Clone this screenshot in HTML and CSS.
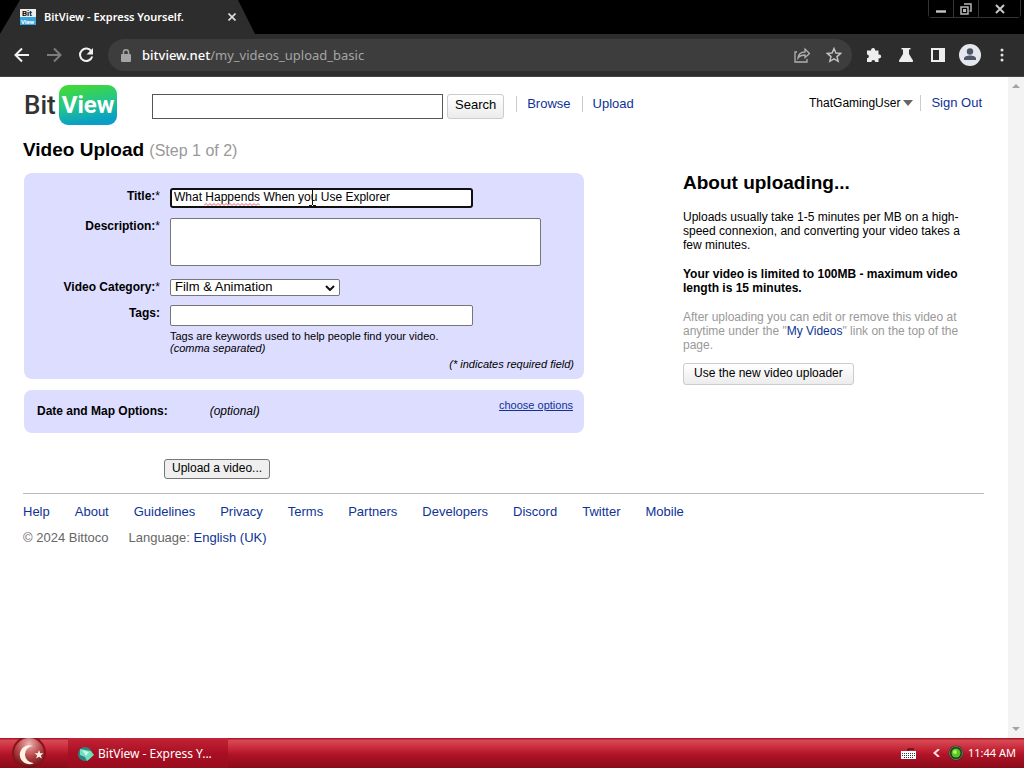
FILE: index.html
```html
<!DOCTYPE html>
<html lang="en">
<head>
  <meta charset="UTF-8">
  <meta name="viewport" content="width=device-width, initial-scale=1.0">
  <title>BitView - Express Yourself.</title>
  <link rel="stylesheet" href="styles.css">
</head>
<body>
  <div class="tab-strip">
    <div class="tab">
      <svg class="favicon" width="16" height="16" viewBox="0 0 16 16">
        <rect width="16" height="8" fill="#eee"/><rect y="8" width="16" height="8" fill="#3aa5dc"/>
        <text x="2" y="7" font-size="8" font-weight="bold" fill="#111">Bit</text>
        <text x="1" y="15" font-size="6" font-weight="bold" fill="#fff">View</text>
      </svg>
      <span class="tab-title">BitView - Express Yourself.</span>
      <button class="tab-close" aria-label="Close tab"><svg width="8" height="8" viewBox="0 0 8 8"><path d="M0.5 0.5l7 7M7.5 0.5l-7 7" stroke="#ddd" stroke-width="1.7"/></svg></button>
    </div>
    <div class="window-buttons">
      <button aria-label="Minimise"><svg width="12" height="12" viewBox="0 0 12 12"><path d="M1 8.5h10" stroke="#c4c4c4" stroke-width="2.4"/></svg></button>
      <button aria-label="Restore"><svg width="12" height="12" viewBox="0 0 12 12" fill="none" stroke="#b8b8b8" stroke-width="1.5"><path d="M1 4h7v7H1zM3.8 6.800h1.500v1.500H3.800zM4 1h7v7H9.500"/></svg></button>
      <button class="wide" aria-label="Close window"><svg width="10" height="10" viewBox="0 0 10 10"><path d="M1 1l8 8M9 1l-8 8" stroke="#c8c8c8" stroke-width="2"/></svg></button>
    </div>
  </div>

  <div class="toolbar">
    <button aria-label="Back"><svg width="16" height="16" viewBox="0 0 16 16"><path d="M15 8H2M8 1.500L1.500 8L8 14.500" fill="none" stroke="#f1f1f1" stroke-width="2"/></svg></button>
    <button aria-label="Forward"><svg width="16" height="16" viewBox="0 0 16 16"><path d="M1 8h13M8 1.500L14.500 8L8 14.500" fill="none" stroke="#7d7d7d" stroke-width="2"/></svg></button>
    <button aria-label="Reload"><svg width="16" height="16" viewBox="0 0 16 16"><path d="M13.500 4.500A6.200 6.200 0 1 0 14.200 9.500" fill="none" stroke="#f1f1f1" stroke-width="2"/><path d="M15 1v6.500H8.500z" fill="#f1f1f1"/></svg></button>
    <div class="address">
      <svg width="10" height="13" viewBox="0 0 10 13"><rect y="5" width="10" height="8" rx="1" fill="#a5a5a5"/><path d="M2.500 5V3.300a2.500 2.500 0 0 1 5 0V5" fill="none" stroke="#a5a5a5" stroke-width="1.500"/></svg>
      <span class="url"><b>bitview.net</b>/my_videos_upload_basic</span>
      <button aria-label="Share"><svg width="16" height="16" viewBox="0 0 16 16" fill="none" stroke="#b0b0b0" stroke-width="1.300"><path d="M3 5H1v10h12v-3"/><path d="M4 11c.5-4 3-6 7-6V2l4.500 4.500L11 10.500V8C8 8 5.500 9 4 11z"/></svg></button>
      <button aria-label="Bookmark"><svg width="16" height="16" viewBox="0 0 16 16"><path d="M8 1.500l1.900 4.500 4.800.4-3.700 3.200 1.200 4.700L8 11.800l-4.200 2.500L5 9.600 1.300 6.400l4.800-.4z" fill="none" stroke="#c4c4c4" stroke-width="1.400"/></svg></button>
    </div>
    <button aria-label="Extensions"><svg width="16" height="16" viewBox="0 0 16 16"><path d="M1 3.500h4.200a2 2 0 1 1 3.800 0h3.500v4a2 2 0 1 1 0 3.800V15H9.200a1.900 1.900 0 0 0-3.800 0H1v-3.800a1.900 1.900 0 0 0 0-3.800z" fill="#eee"/></svg></button>
    <button aria-label="Labs"><svg width="16" height="16" viewBox="0 0 16 16"><path d="M3.500 1h9v1.500H11V7l4 6.500q.5 1.500-1 1.500H2q-1.500 0-1-1.500L5 7V2.500H3.500z" fill="#eee"/></svg></button>
    <button aria-label="Side panel"><svg width="14" height="14" viewBox="0 0 14 14"><path fill-rule="evenodd" d="M0 0h14v14H0zM2 2v10h6V2z" fill="#eee"/></svg></button>
    <button aria-label="Profile"><svg width="22" height="22" viewBox="0 0 22 22"><circle cx="11" cy="11" r="11" fill="#e4e7ee"/><circle cx="11" cy="7.500" r="3.200" fill="#4d5566"/><path d="M5 16v-1.500c0-4 12-4 12 0V16z" fill="#4d5566"/></svg></button>
    <button class="menu" aria-label="Menu"><svg width="4" height="16" viewBox="0 0 4 16" fill="#e4e4e4"><circle cx="2" cy="3" r="1.500"/><circle cx="2" cy="8" r="1.500"/><circle cx="2" cy="13" r="1.500"/></svg></button>
  </div>

  <div class="viewport">
    <div class="page">
      <header class="header">
        <a class="logo" href="#"><span class="logo-bit">Bit</span><span class="logo-view">View</span></a>
        <form class="search">
          <input type="text" aria-label="Search videos">
          <button class="btn" type="button">Search</button>
        </form>
        <nav class="nav"><a href="#">Browse</a><a href="#">Upload</a></nav>
        <div class="user">
          <button type="button" class="user-name">ThatGamingUser <svg width="10" height="6" viewBox="0 0 10 6"><path d="M0 0h10L5 6z" fill="#666"/></svg></button>
          <a href="#">Sign Out</a>
        </div>
      </header>

      <h1>Video Upload <small>(Step 1 of 2)</small></h1>

      <div class="columns">
        <form class="upload">
          <div class="panel fields">
            <label for="title">Title:<span>*</span></label>
            <div class="title-field">
              <input id="title" class="title" type="text" value="What Happends When you Use Explorer" spellcheck="false">
              <svg class="misspelt" width="56" height="3" viewBox="0 0 56 3"><path d="M0 2.500l2-2 2 2 2-2 2 2 2-2 2 2 2-2 2 2 2-2 2 2 2-2 2 2 2-2 2 2 2-2 2 2 2-2 2 2 2-2 2 2 2-2 2 2 2-2 2 2 2-2 2 2 2-2 2 2" fill="none" stroke="#d66"/></svg>
              <svg class="ibeam" width="7" height="17" viewBox="0 0 7 17"><path d="M0 .5h3M4 .5h3M3.500 1v15M0 16.500h3M4 16.500h3" fill="none" stroke="#111"/></svg>
            </div>
            <label for="description">Description:<span>*</span></label>
            <textarea id="description"></textarea>
            <label for="category">Video Category:<span>*</span></label>
            <div class="select-wrap">
              <select id="category"><option>Film &amp; Animation</option></select>
              <svg width="10" height="6" viewBox="0 0 10 6"><path d="M1 1l4 4 4-4" fill="none" stroke="#111" stroke-width="2"/></svg>
            </div>
            <label for="tags">Tags:</label>
            <div>
              <input id="tags" type="text">
              <p class="hint">Tags are keywords used to help people find your video.<br><em>(comma separated)</em></p>
            </div>
            <p class="required">(* indicates required field)</p>
          </div>
          <div class="panel options">
            <strong>Date and Map Options:</strong>
            <em>(optional)</em>
            <a href="#">choose options</a>
          </div>
          <button class="submit" type="button">Upload a video...</button>
        </form>

        <aside class="about">
          <h2>About uploading...</h2>
          <p>Uploads usually take 1-5 minutes per MB on a high-speed connexion, and converting your video takes a few minutes.</p>
          <p><strong>Your video is limited to 100MB - maximum video length is 15 minutes.</strong></p>
          <p class="muted">After uploading you can edit or remove this video at anytime under the "<a href="#">My Videos</a>" link on the top of the page.</p>
          <button class="btn" type="button">Use the new video uploader</button>
        </aside>
      </div>

      <footer class="footer">
        <nav>
          <a href="#">Help</a><a href="#">About</a><a href="#">Guidelines</a><a href="#">Privacy</a><a href="#">Terms</a><a href="#">Partners</a><a href="#">Developers</a><a href="#">Discord</a><a href="#">Twitter</a><a href="#">Mobile</a>
        </nav>
        <p><span>© 2024 Bittoco</span><span>Language: <a href="#">English (UK)</a></span></p>
      </footer>
    </div>
    <div class="scrollbar">
      <svg width="8" height="4" viewBox="0 0 8 4"><path d="M0 4h8L4 0z" fill="#a3a3a3"/></svg>
      <svg width="8" height="4" viewBox="0 0 8 4"><path d="M0 0h8L4 4z" fill="#a3a3a3"/></svg>
    </div>
  </div>

  <div class="taskbar">
    <button class="start" aria-label="Start">
      <svg width="34" height="30" viewBox="0 0 34 30">
        <defs><radialGradient id="orb" cx=".5" cy=".2" r=".8"><stop offset="0" stop-color="#eeb4b4"/><stop offset=".5" stop-color="#b9494c"/><stop offset="1" stop-color="#6b0a10"/></radialGradient></defs>
        <circle cx="17" cy="15" r="17" fill="#8b1119"/><circle cx="17" cy="15" r="15" fill="url(#orb)"/>
        <path d="M21 8a9.500 9.500 0 1 0 1 17a8 8 0 1 1-1-17z" fill="#fff3e2"/>
        <path d="M27 12l1.200 3.200 3.300.1-2.600 2 .9 3.200-2.800-1.800-2.800 1.800.9-3.200-2.600-2 3.300-.1z" fill="#fff3e2"/>
      </svg>
    </button>
    <button class="task">
      <svg width="16" height="16" viewBox="0 0 16 16"><circle cx="7" cy="8" r="7" fill="#2c8580"/><path d="M2 3l11 2 3 4-7 6-2-4-5-2z" fill="#6ee0bd"/><path d="M4 4l7 2-3 4z" fill="#c4f7e4"/></svg>
      BitView - Express Y...
    </button>
    <div class="tray">
      <svg class="keyboard" width="15" height="11" viewBox="0 0 15 11"><path d="M7 3V1h6" fill="none" stroke="#320508"/><rect y="3" width="15" height="8" fill="#fff"/><path d="M1 5.500h13M1 7.500h13M3 9.500h9" stroke="#333" stroke-dasharray="1 1"/></svg>
      <svg class="chevron" width="7" height="8" viewBox="0 0 7 8"><path d="M6 0L1.500 4L6 8" fill="none" stroke="#ffdede" stroke-width="2"/></svg>
      <svg class="status" width="16" height="16" viewBox="0 0 16 16"><circle cx="8" cy="8" r="7.500" fill="#24351f"/><circle cx="8" cy="8" r="6.500" fill="none" stroke="#6f7b6a"/><circle cx="8" cy="8" r="4.500" fill="#58c91c"/><circle cx="7" cy="7" r="2" fill="#a6f765"/></svg>
      <span>11:44 AM</span>
    </div>
  </div>
</body>
</html>
```

FILE: styles.css
```css
* { box-sizing: border-box; }
body { margin: 0; height: 100vh; display: flex; flex-direction: column; background: #fff; color: #000; font: 13px/16px "Liberation Sans", Arial, sans-serif; }
svg { display: block; flex: none; }
a { color: #0e3396; text-decoration: none; }
a:hover { text-decoration: underline; }
h1, h2, p { margin: 0; }
button, input, select, textarea { font: inherit; color: inherit; margin: 0; }

/* browser window */
.tab-strip { height: 34px; flex: none; display: flex; justify-content: space-between; align-items: flex-start; background: #000; }
.tab { width: 255px; height: 34px; padding: 0 19px 0 20px; display: flex; align-items: center; background: #2d2d2d; color: #fff; clip-path: polygon(20px 0, 238px 0, 100% 100%, 0 100%); }
.favicon { font-family: Roboto, sans-serif; }
.tab-title { flex: 1; margin-left: 8px; font: 600 11px/16px "Noto Sans", sans-serif; white-space: nowrap; }
.tab-close { border: 0; padding: 0; background: none; }
.window-buttons { display: flex; margin-right: 3px; border: 1px solid #333; border-top: 0; border-radius: 0 0 4px 4px; }
.window-buttons button { width: 25px; height: 17px; padding: 0; border: 0; border-right: 1px solid #333; background: #000; display: flex; align-items: center; justify-content: center; }
.window-buttons .wide { width: 41px; border-right: 0; }
.toolbar { height: 43px; flex: none; display: flex; align-items: center; padding: 0 6px; background: #2d2d2d; border-bottom: 1px solid #444; }
.toolbar button { width: 32px; height: 32px; padding: 0; border: 0; background: none; display: flex; align-items: center; justify-content: center; }
.address { flex: 1; height: 32px; margin: 0 6px; padding: 0 2px 0 13px; display: flex; align-items: center; background: #3d3d3d; border-radius: 16px; }
.url { flex: 1; margin-left: 11px; color: #a5a5a5; font: 13px/20px "Noto Sans", sans-serif; }
.url b { color: #fff; font-weight: 500; }
.viewport { flex: 1; min-height: 0; display: flex; }
.page { flex: 1; overflow: hidden; padding: 8px 24px 0 23px; }
.scrollbar { width: 16px; flex: none; padding: 7px 0; display: flex; flex-direction: column; justify-content: space-between; align-items: center; background: #f3f3f3; }

/* site header */
.header { display: flex; align-items: flex-start; height: 55px; }
.logo { width: 129px; padding-left: 1px; display: flex; align-items: center; gap: 3px; font: 26px/40px Roboto, sans-serif; }
.logo:hover { text-decoration: none; }
.logo-bit { color: #333; font-weight: 500; }
.logo-view { padding: 0 3px; border-radius: 9px; color: #fff; font-weight: bold; font-size: 24px; background: linear-gradient(170deg, #3fd83c 10%, #24c787 45%, #099fc7 85%); }
.search { display: flex; gap: 4px; padding-top: 9px; }
.search input { width: 291px; height: 25px; border: 1px solid #555; }
.btn { height: 25px; padding: 0 7px 4px; border: 1px solid #ccc; border-radius: 3px; background: linear-gradient(#fff, #ececec); }
.nav { display: flex; margin-left: 12px; padding-top: 11px; }
.nav a, .user a { padding: 0 11px 0 10px; border-left: 1px solid #ccc; }
.user { margin-left: auto; padding-top: 10px; display: flex; }
.user a { padding-right: 2px; }
.user-name { display: flex; align-items: center; gap: 3px; padding: 0 7px 0 0; border: 0; background: none; font-size: 12px; }

h1 { font-size: 19px; line-height: 20px; }
h1 small { color: #999; font-size: 16px; font-weight: normal; }
.columns { display: grid; grid-template-columns: 560fr 301fr; column-gap: 99px; margin: 12px 0 0 1px; font-size: 12px; }

/* upload form */
.panel { background: #ddf; border-radius: 8px; }
.fields { padding: 15px 10px 9px 0; display: grid; grid-template-columns: 136px 1fr; column-gap: 10px; align-items: start; }
.fields label { text-align: right; font-weight: bold; line-height: 16px; }
.fields label span { font-weight: normal; }
.fields input, .fields textarea, .fields select { display: block; border: 1px solid #767676; border-radius: 2px; background: #fff; font-size: 13px; }
.fields input { width: 303px; height: 21px; padding: 0 3px; }
.fields .title { height: 20px; border: 2px solid #101010; border-radius: 3px; padding: 0 2px 2px; outline: 0; font-size: 12px; }
.title-field { position: relative; margin-bottom: 10px; }
.misspelt { position: absolute; left: 34px; top: 15px; }
.ibeam { position: absolute; left: 139px; top: 1px; }
.fields textarea { width: 371px; height: 48px; margin-bottom: 13px; resize: none; }
.select-wrap { position: relative; width: 170px; margin-bottom: 9px; }
.select-wrap svg { position: absolute; right: 5px; top: 6px; }
.fields select { appearance: none; width: 100%; height: 17px; padding: 0 4px 2px; line-height: 14px; }
.hint { margin-top: 4px; font-size: 11px; line-height: 12px; }
.required { grid-column: 1 / -1; margin-top: 4px; text-align: right; font-size: 11px; line-height: 12px; font-style: italic; }
.options { margin-top: 11px; height: 43px; padding: 8px 11px 0 13px; display: flex; line-height: 26px; }
.options em { margin-left: 42px; }
.options a { margin-left: auto; font-size: 11px; line-height: 14px; text-decoration: underline; }
.submit { display: block; margin: 26px 0 0 140px; height: 20px; padding: 0 7px 2px; border: 1px solid #767676; border-radius: 3px; background: #efefef; line-height: 16px; }

.about { line-height: 14px; }
.about h2 { margin-bottom: 17px; font-size: 19px; line-height: 20px; }
.about p { margin-bottom: 15px; padding-right: 12px; }
.about .muted { margin-bottom: 11px; color: #999; }
.about .btn { height: 22px; padding: 0 10px 2px; }

.footer { margin-top: 14px; padding-top: 10px; border-top: 1px solid #bbb; }
.footer nav { display: flex; gap: 25px; }
.footer p { display: flex; gap: 20px; margin-top: 10px; color: #666; }

/* desktop taskbar */
.taskbar { height: 30px; flex: none; display: flex; background: linear-gradient(#a40b1a, #d64a55 8%, #c8283a 35%, #b01427 55%, #8a0a1a); color: #fff; font: 12px/16px "Noto Sans", sans-serif; }
.start { margin-left: 12px; padding: 0; border: 0; background: none; }
.task { width: 160px; margin-left: 22px; padding: 2px 0 0 10px; border: 0; display: flex; align-items: center; gap: 4px; background: linear-gradient(#c32437, #a90f23 50%, #980c1e); white-space: nowrap; }
.tray { margin-left: auto; padding-right: 8px; display: flex; align-items: center; font-size: 11px; }
.chevron { margin: 0 8px 0 17px; }
.status { margin-right: 4px; }
```
